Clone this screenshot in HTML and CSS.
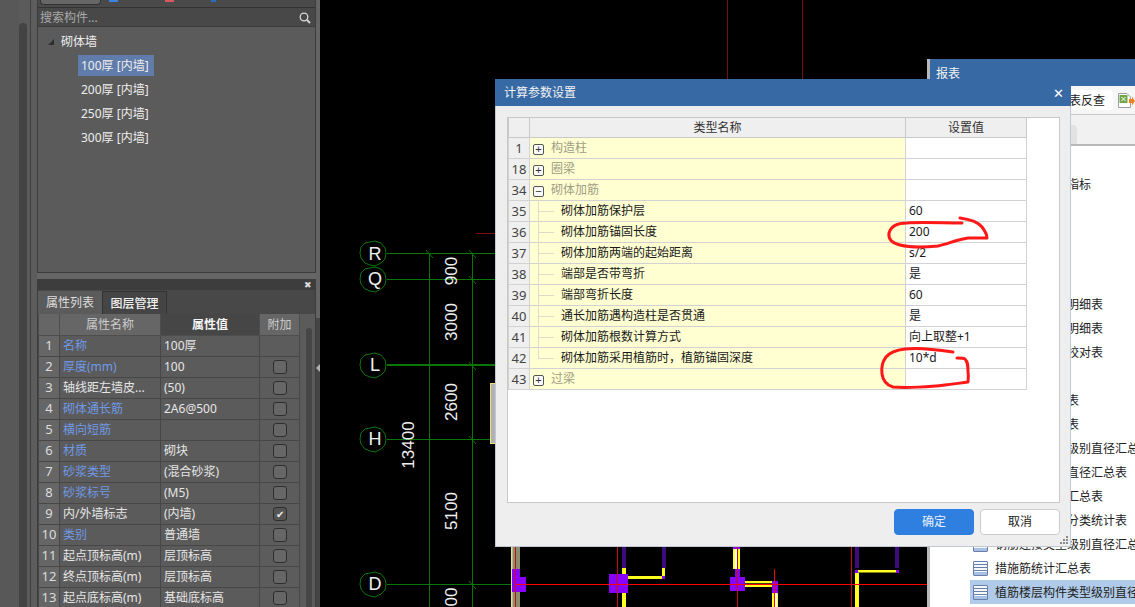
FILE: index.html
```html
<!DOCTYPE html>
<html lang="zh-CN">
<head>
<meta charset="utf-8">
<title>计算参数设置</title>
<link rel="stylesheet" href="styles.css">
</head>
<body>
<div class="app">
  <aside class="side">
    <div class="rail"><div class="rail-main"></div><div class="rail-track"><div class="rail-thumb"></div></div><div class="rail-end"></div></div>
    <div class="panels">
      <section class="comp-panel">
        <div class="comp-tools">
          <span class="tool-box"></span><span class="mark mark-blue"></span><span class="mark mark-red"></span><span class="mark mark-blue2"></span>
        </div>
        <div class="search"><span>搜索构件...</span>
          <svg class="search-icon" width="12" height="12" viewBox="0 0 12 12"><circle cx="5" cy="5" r="3.8" fill="none" stroke="#d8d8d8" stroke-width="1.3"/><path d="M8 8l3 3" stroke="#d8d8d8" stroke-width="1.8"/></svg>
        </div>
        <div class="tree">
          <div class="tree-root"><span class="tri"></span>砌体墙</div>
          <div class="tree-item sel">100厚 [内墙]</div>
          <div class="tree-item">200厚 [内墙]</div>
          <div class="tree-item">250厚 [内墙]</div>
          <div class="tree-item">300厚 [内墙]</div>
        </div>
      </section>
      <div class="panel-gap"></div>
      <section class="prop-panel">
        <div class="prop-head"><span class="close-x">✖</span></div>
        <div class="tabs"><span class="tab on">属性列表</span><span class="tab">图层管理</span></div>
        <div class="prop-body">
          <table class="prop">
            <colgroup><col class="c1"><col class="c2"><col class="c3"><col class="c4"></colgroup>
            <tr class="ph"><th></th><th>属性名称</th><th class="pv">属性值</th><th>附加</th></tr>
            <tr><td class="n">1</td><td class="blue">名称</td><td>100厚</td><td></td></tr>
            <tr><td class="n">2</td><td class="blue">厚度(mm)</td><td>100</td><td><i class="chk"></i></td></tr>
            <tr><td class="n">3</td><td>轴线距左墙皮...</td><td>(50)</td><td><i class="chk"></i></td></tr>
            <tr><td class="n">4</td><td class="blue">砌体通长筋</td><td>2A6@500</td><td><i class="chk"></i></td></tr>
            <tr><td class="n">5</td><td class="blue">横向短筋</td><td></td><td><i class="chk"></i></td></tr>
            <tr><td class="n">6</td><td class="blue">材质</td><td>砌块</td><td><i class="chk"></i></td></tr>
            <tr><td class="n">7</td><td class="blue">砂浆类型</td><td>(混合砂浆)</td><td><i class="chk"></i></td></tr>
            <tr><td class="n">8</td><td class="blue">砂浆标号</td><td>(M5)</td><td><i class="chk"></i></td></tr>
            <tr><td class="n">9</td><td>内/外墙标志</td><td>(内墙)</td><td><i class="chk on">✔</i></td></tr>
            <tr><td class="n">10</td><td class="blue">类别</td><td>普通墙</td><td><i class="chk"></i></td></tr>
            <tr><td class="n">11</td><td>起点顶标高(m)</td><td>层顶标高</td><td><i class="chk"></i></td></tr>
            <tr><td class="n">12</td><td>终点顶标高(m)</td><td>层顶标高</td><td><i class="chk"></i></td></tr>
            <tr><td class="n">13</td><td>起点底标高(m)</td><td>基础底标高</td><td><i class="chk"></i></td></tr>
          </table>
          <div class="prop-scroll"><div class="prop-thumb"></div></div>
        </div>
      </section>
    </div>
    <div class="splitter"><span class="grip"></span></div>
  </aside>

  <main class="canvas">
    <svg class="cad" width="814" height="607" viewBox="321 0 814 607">
      <g stroke="#7a0f0f" fill="none">
        <path d="M727.5 0V80M802.5 0V80M476 233.5H496"/>
      </g>
      <g stroke="#0a760a" fill="none">
        <path d="M387 253.5H496M387 279.5H496M387 439.5H496M387 584.5H516"/>
        <path d="M387 365H496" stroke-width="2"/>
        <path d="M429.5 253V607M472.5 253V607"/>
        <path d="M426 250l7 8M469 250l7 8M469 276l7 8M469 362l7 8M469 436l7 8M469 581l7 8"/>
        <path d="M370 242l5-1 6 2 4 5 1 5-1 6-4 4-6 3-5-1-5-2-4-5-1-5 1-6 4-4zM370 268l5-1 6 2 4 5 1 5-1 6-4 4-6 3-5-1-5-2-4-5-1-5 1-6 4-4zM370 354l5-1 6 2 4 5 1 5-1 6-4 4-6 3-5-1-5-2-4-5-1-5 1-6 4-4zM370 428l5-1 6 2 4 5 1 5-1 6-4 4-6 3-5-1-5-2-4-5-1-5 1-6 4-4zM370 573l5-1 6 2 4 5 1 5-1 6-4 4-6 3-5-1-5-2-4-5-1-5 1-6 4-4z"/>
      </g>
      <g class="axis" text-anchor="middle">
        <text x="375" y="260">R</text><text x="375" y="285">Q</text><text x="375" y="371">L</text><text x="375" y="445">H</text><text x="375" y="590">D</text>
      </g>
      <g class="dim" text-anchor="middle">
        <text transform="translate(457 271) rotate(-90)">900</text>
        <text transform="translate(457 322) rotate(-90)">3000</text>
        <text transform="translate(457 402) rotate(-90)">2600</text>
        <text transform="translate(457 511) rotate(-90)">5100</text>
        <text transform="translate(414 445) rotate(-90)">13400</text>
      </g>
      <text class="dim-end" transform="translate(457 606.500) rotate(-90)">00</text>
      <rect x="490.500" y="383.500" width="8" height="60" fill="#b0b0b8" stroke="#f0e070"/>
      <!-- bottom structure -->
      <rect x="511" y="546" width="9" height="61" fill="#8c8c70"/>
      <rect x="511" y="546" width="1.500" height="61" fill="#e8e090"/>
      <g fill="#3f0a7c">
        <rect x="622" y="546" width="4" height="22"/><rect x="662" y="546" width="4" height="22"/>
        <rect x="855" y="546" width="4" height="22"/><rect x="895" y="546" width="4" height="22"/>
      </g>
      <g fill="#ffff20">
        <rect x="622" y="568" width="4" height="6"/><rect x="662" y="568" width="3" height="8"/><rect x="628" y="576" width="36" height="3"/>
        <rect x="622" y="593" width="4" height="14"/><rect x="857" y="570" width="40" height="2.500"/><rect x="855" y="573" width="4" height="34"/>
        <rect x="733" y="549" width="7" height="20"/><rect x="745" y="581" width="27" height="6"/><rect x="772" y="593" width="6" height="14"/>
      </g>
      <g fill="#ffffff"><rect x="735" y="549" width="3" height="20"/><rect x="774" y="593" width="3" height="14"/></g>
      <rect x="745" y="583" width="27" height="1.500" fill="#443c10"/>
      <g fill="#8a00ff">
        <rect x="512" y="569" width="8" height="23"/><rect x="512" y="577" width="14" height="15"/>
        <rect x="609" y="574" width="19" height="19"/><rect x="662" y="576" width="3" height="3"/>
        <rect x="730" y="577" width="15" height="14"/><rect x="735" y="569" width="5" height="8"/><rect x="733" y="546" width="7" height="3"/>
        <rect x="772" y="581" width="6" height="12"/><rect x="855" y="570" width="3" height="3"/><rect x="896" y="570" width="3" height="3"/>
      </g>
      <path d="M515.500 546V607M617.500 546V607M737.500 546V607M851.500 546V607" stroke="#c01010" fill="none"/>
      <path d="M774.500 569V607M516 584.500H927" stroke="#ff0000" fill="none"/>
    </svg>
  </main>
</div>

<section class="report">
  <header class="report-title">报表</header>
  <div class="report-tools">
    <span class="rt-btn">表反查</span>
    <svg class="xls" width="18" height="17" viewBox="0 0 18 17"><path d="M1.500 1.500H10L13.500 5V15.500H1.500z" fill="#fff" stroke="#9aa0a0"/><rect x="2.500" y="3" width="8" height="8" fill="#72a84a"/><path d="M4.500 5l4 4M8.500 5l-4 4" stroke="#fff"/><path d="M12 7h3V4.500L18 9l-3 4.500V11h-3z" fill="#f08020"/></svg>
  </div>
  <div class="report-tabs"><span class="rtab"></span></div>
  <ul class="report-list">
    <li><span class="li-ico"></span>工程技术经济指标</li>
    <li></li>
    <li></li>
    <li></li>
    <li></li>
    <li><span class="li-ico"></span>部位构件统计明细表</li>
    <li><span class="li-ico"></span>楼层构件统计明细表</li>
    <li><span class="li-ico"></span>楼层构件统计校对表</li>
    <li></li>
    <li><span class="li-ico"></span>钢筋形状统计表</li>
    <li><span class="li-ico"></span>构件汇总信息表</li>
    <li><span class="li-ico"></span>楼层构件类型级别直径汇总表</li>
    <li><span class="li-ico"></span>构件类型级别直径汇总表</li>
    <li><span class="li-ico"></span>钢筋级别直径汇总表</li>
    <li><span class="li-ico"></span>楼层构件接头分类统计表</li>
    <li><span class="li-ico"></span>钢筋连接类型级别直径汇总表</li>
    <li><span class="li-ico"></span>措施筋统计汇总表</li>
    <li class="cur"><span class="li-ico"></span>植筋楼层构件类型级别直径汇总表</li>
  </ul>
</section>

<section class="dialog">
  <header class="dlg-title"><span>计算参数设置</span><span class="dlg-close">✕</span></header>
  <div class="dlg-body">
    <div class="grid-box">
      <table class="grid">
        <colgroup><col class="g1"><col class="g2"><col class="g3"></colgroup>
        <tr class="gh"><th></th><th>类型名称</th><th>设置值</th></tr>
        <tr><td class="num">1</td><td class="name group"><i class="box">+</i>构造柱</td><td class="val"></td></tr>
        <tr><td class="num">18</td><td class="name group"><i class="box">+</i>圈梁</td><td class="val"></td></tr>
        <tr><td class="num">34</td><td class="name group open"><i class="box">−</i>砌体加筋</td><td class="val"></td></tr>
        <tr><td class="num">35</td><td class="name child">砌体加筋保护层</td><td class="val">60</td></tr>
        <tr><td class="num">36</td><td class="name child">砌体加筋锚固长度</td><td class="val">200</td></tr>
        <tr><td class="num">37</td><td class="name child">砌体加筋两端的起始距离</td><td class="val">s/2</td></tr>
        <tr><td class="num">38</td><td class="name child">端部是否带弯折</td><td class="val">是</td></tr>
        <tr><td class="num">39</td><td class="name child">端部弯折长度</td><td class="val">60</td></tr>
        <tr><td class="num">40</td><td class="name child">通长加筋遇构造柱是否贯通</td><td class="val">是</td></tr>
        <tr><td class="num">41</td><td class="name child">砌体加筋根数计算方式</td><td class="val">向上取整+1</td></tr>
        <tr><td class="num">42</td><td class="name child last">砌体加筋采用植筋时，植筋锚固深度</td><td class="val">10*d</td></tr>
        <tr><td class="num">43</td><td class="name group"><i class="box">+</i>过梁</td><td class="val"></td></tr>
      </table>
    </div>
    <div class="dlg-actions">
      <button class="btn primary">确定</button>
      <button class="btn">取消</button>
    </div>
    <svg class="resize" width="8" height="8" viewBox="0 0 8 8"><path d="M6 0h2v2H6zM3 3h2v2H3zM6 3h2v2H6zM0 6h2v2H0zM3 6h2v2H3zM6 6h2v2H6z" fill="#8a8a8a"/></svg>
  </div>
</section>

<svg class="ink" width="1135" height="607" viewBox="0 0 1135 607">
  <path d="M962 223C945 223 920 222 907 223C897 223 891 226 889 233C888 239 892 243 900 245C912 248 928 247 938 246C948 244 955 240 968 238C975 238 982 238 987 238C987 234 985 231 982 227C977 221 968 219 960 218" />
  <path d="M957 358C960 358 964 358 965 359C968 362 968 366 968 372C969 376 968 380 968 382C960 383 955 384 945 385C930 387 905 388 893 387C886 385 883 381 882 374C881 367 883 361 886 357C890 352 897 350 905 349C920 347 940 350 953 352" />
</svg>
</body>
</html>
```
FILE: styles.css
```css
* { box-sizing: border-box; }
html, body { margin: 0; padding: 0; }
body {
  width: 1135px; height: 607px; overflow: hidden; position: relative; background: #000;
  font: 12px/1.2 "Noto Sans", "Noto Sans CJK SC", sans-serif; color: #222;
}
.app { display: flex; width: 100%; height: 100%; }
.side { width: 321px; flex: none; display: flex; height: 100%; }
.rail { width: 37px; flex: none; display: flex; background: #5b5b5b; }
.rail-main { width: 21px; background: #585858; }
.rail-track { width: 8px; padding-top: 23px; }
.rail-thumb { width: 8px; height: 100%; border-radius: 4px 4px 0 0; background: #434343; }
.rail-end { width: 8px; margin-left: 3px; border-left: 1px solid #3f3f3f; background: #5d5d5d; }

.panels { width: 279px; flex: none; display: flex; flex-direction: column; border-left: 1px solid #3c3c3c; border-right: 1px solid #3c3c3c; background: #5b5b5b; color: #eee; }
.comp-panel { height: 273px; flex: none; display: flex; flex-direction: column; border-bottom: 1px solid #3c3c3c; }
.comp-tools { height: 8px; flex: none; display: flex; background: #4a4a4a; border-bottom: 1px solid #333; }
.tool-box { width: 61px; height: 5px; margin-left: 2px; background: #666; border: 1px solid #333; border-top: 0; border-radius: 0 0 4px 4px; }
.mark { height: 2px; width: 9px; margin-left: 8px; }
.mark-blue { background: #3d82dc; }
.mark-red { background: #d85a60; margin-left: 47px; }
.mark-blue2 { background: #2d6cb8; width: 5px; margin-left: 37px; }
.search { height: 19px; flex: none; display: flex; align-items: center; justify-content: space-between; padding: 2px 4px 0 2px; background: #484848; border-bottom: 1px solid #3c3c3c; color: #a8a8a8; }
.tree { flex: 1; padding-top: 6px; position: relative; }
.tree-root { height: 22px; padding: 0 0 4px 23px; display: flex; align-items: center; position: relative; }
.tri { position: absolute; left: 10px; top: 6px; width: 0; height: 0; border-left: 6px solid transparent; border-bottom: 6px solid #2e2e2e; }
.tree-item { width: 76px; height: 21px; margin: 0 0 3px 40px; padding: 0 0 0 3px; line-height: 21px; white-space: nowrap; }
.tree-item.sel { background: #607caa; }
.panel-gap { height: 6px; flex: none; background: #666; margin: 0 -1px; }

.prop-panel { flex: 1; min-height: 0; display: flex; flex-direction: column; overflow: hidden; }
.prop-head { height: 11px; flex: none; background: #3d3d3d; position: relative; }
.close-x { position: absolute; right: 3px; top: 0; font-size: 9px; line-height: 11px; color: #ddd; }
.tabs { height: 24px; flex: none; display: flex; background: #484848; padding-top: 1px; }
.tab { width: 64px; padding-top: 1px; text-align: center; line-height: 22px; background: #454545; border-right: 1px solid #333; border-top: 1px solid #333; color: #f0f0f0; font-weight: 500; }
.tab.on { width: 65px; background: #5b5b5b; color: #ddd; border-top: 0; font-weight: 400; }
.prop-body { flex: 1; display: flex; min-height: 0; }
table.prop { width: 261px; flex: none; border-collapse: collapse; table-layout: fixed; }
col.c1 { width: 21px; } col.c2 { width: 101px; } col.c3 { width: 99px; } col.c4 { width: 40px; }
.prop th { height: 21px; padding: 1px 0 0; background: #666; font-weight: 400; color: #ccc; border: 1px solid #4d4d4d; border-top: 0; }
.prop th.pv { background: #464646; color: #f4f4f4; font-weight: 700; }
.prop td { height: 21px; padding: 1px 3px 0; border: 1px solid #474747; color: #e6e6e6; white-space: nowrap; overflow: hidden; text-align: left; vertical-align: middle; }
.prop td.n { background: #666; color: #ddd; text-align: center; padding: 1px 0 0; font-size: 13px; }
.prop td.blue { color: #7099e6; }
.prop td:last-child { text-align: center; padding: 0; background: #5c5c5c; }
.chk { display: block; width: 14px; height: 14px; margin: 0 auto; border: 1px solid #2e2e2e; border-radius: 3px; background: #666; font-style: normal; font-size: 10px; line-height: 12px; color: #eee; text-align: center; }
.chk.on { background: #555; }
.prop-scroll { flex: 1; padding: 14px 3px 0 6px; background: #5b5b5b; }
.prop-thumb { height: 100%; border-radius: 4px 4px 0 0; background: #464646; }
.splitter { width: 4px; flex: none; position: relative; background: linear-gradient(#646464 318px, #454545 318px); }
.grip { position: absolute; left: 0; top: 364px; width: 0; height: 0; border-top: 4px solid transparent; border-bottom: 4px solid transparent; border-right: 4px solid #b0b0b0; }

.canvas { flex: 1; min-width: 0; background: #000; }
.cad { display: block; }
.axis text { font: 18px "Liberation Sans", sans-serif; fill: #f0f0f0; }
.dim text, .dim-end { font: 17px "Liberation Sans", sans-serif; fill: #f0f0f0; }

/* floating windows */
.report { position: absolute; left: 927px; top: 59px; width: 208px; height: 548px; background: #fff; border-left: 3px solid #b8b8bc; display: flex; flex-direction: column; overflow: hidden; }
.report-title { height: 27px; flex: none; margin-left: -3px; padding: 1px 0 0 9px; background: #376aa5; color: #f2f2f2; line-height: 27px; }
.report-tools { height: 29px; flex: none; display: flex; align-items: center; justify-content: flex-end; background: #f6f6f6; border-bottom: 1px solid #c8c8c8; overflow: hidden; }
.rt-btn { width: 44px; height: 20px; line-height: 22px; margin-right: 4px; background: #fff; border-radius: 3px; white-space: nowrap; }
.xls { flex: none; }
.report-tabs { height: 31px; flex: none; background: #f1f1f1; border-bottom: 2px solid #b8b8b8; padding-top: 10px; }
.rtab { display: block; width: 147px; height: 19px; background: #e2e2e2; border-radius: 0 4px 0 0; }
.report-list { list-style: none; margin: 0; padding: 26px 0 0 40px; }
.report-list li { height: 24px; padding: 2px 0 0 3px; display: flex; align-items: center; gap: 7px; white-space: nowrap; color: #222; }
.report-list li.cur { background: #b0cbe9; }
.li-ico { flex: none; width: 15px; height: 15px; margin-top: -2px; border: 1px solid #6a7fa8; border-radius: 1px; background: repeating-linear-gradient(#f4f8ff 0 2px, #6a7fa8 2px 3px); box-shadow: inset 0 -3px 0 #a9c0e6; }

.dialog { position: absolute; left: 495px; top: 79px; width: 576px; height: 468px; display: flex; flex-direction: column; background: #eee; border: 1px solid #c2c8d2; border-top: 0; }
.dlg-title { height: 27px; flex: none; margin: 0 -1px; padding: 2px 7px 0 9px; display: flex; justify-content: space-between; align-items: center; background: #376aa5; color: #f2f2f2; }
.dlg-close { font-size: 13px; color: #fff; }
.dlg-body { flex: 1; position: relative; padding: 11px 10px 0 11px; }
.grid-box { width: 553px; height: 386px; background: #fff; border: 1px solid #c8c8c8; }
table.grid { width: 518px; border-collapse: collapse; table-layout: fixed; }
col.g1 { width: 21px; } col.g2 { width: 376px; } col.g3 { width: 121px; }
.grid th { height: 19px; padding: 2px 0 0; background: #efefef; font-weight: 400; color: #333; border: 1px solid #c8c8c8; border-top: 0; }
.grid td { height: 21px; padding: 2px 0 0; border: 1px solid #d2d2d2; white-space: nowrap; vertical-align: middle; color: #1a1a1a; }
.grid td.num { background: #efefef; text-align: center; color: #444; font-size: 13px; }
.grid td.name { background: #ffffd2; position: relative; }
.grid td.val { padding-left: 3px; background: #fff; }
.group { padding-left: 3px !important; color: #a09c84 !important; }
.box { display: inline-block; width: 11px; height: 11px; margin-right: 7px; border: 1px solid #555; border-radius: 2px; background: #fafafa; color: #333; font: 11px/9px "Liberation Sans", sans-serif; text-align: center; vertical-align: -1px; }
.child { padding-left: 31px !important; }
.child::before { content: ""; position: absolute; left: 8px; top: -1px; bottom: -1px; border-left: 1px solid #dcdcc8; }
.child::after { content: ""; position: absolute; left: 8px; width: 16px; top: 10px; border-top: 1px solid #dcdcc8; }
.last::before { bottom: 10px; }
.dlg-actions { display: flex; justify-content: flex-end; gap: 6px; margin-top: 6px; }
.btn { width: 80px; height: 26px; padding: 1px 0 0; font: inherit; border: 1px solid #ccc; border-radius: 4px; background: #fff; color: #222; }
.btn.primary { background: #2e7fe0; border-color: #2e7fe0; color: #e8f0fa; }
.resize { position: absolute; right: 2px; bottom: 2px; }
.ink { position: absolute; left: 0; top: 0; pointer-events: none; }
.ink path { fill: none; stroke: #ff1818; stroke-width: 3; stroke-linecap: round; stroke-linejoin: round; }
```
